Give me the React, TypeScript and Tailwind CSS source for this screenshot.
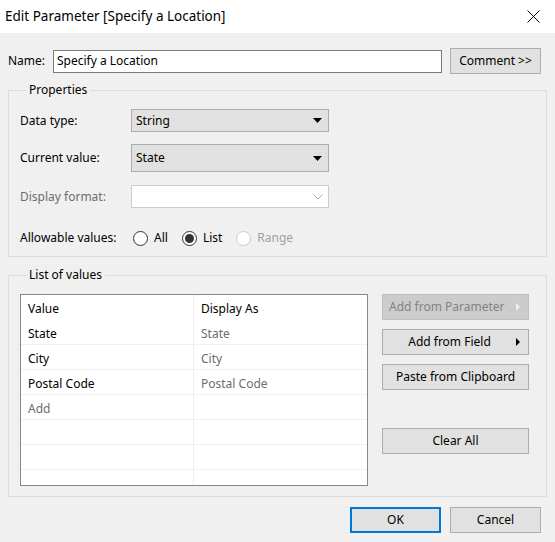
import React from "react";

const font = { fontFamily: '"Noto Sans", "Open Sans", sans-serif' };

function Select({ value, tall }: { value: string; tall?: boolean }) {
  return (
    <div
      className={`flex w-[198px] items-center justify-between border border-[#adadad] bg-[#e1e1e1] pl-[4px] pr-[6px] ${tall ? "h-[28px]" : "h-[23px]"}`}
    >
      <span>{value}</span>
      <svg width="9" height="5" viewBox="0 0 9 5">
        <path d="M0 0h9L4.5 5z" fill="#000" />
      </svg>
    </div>
  );
}

function Radio({ label, checked, disabled }: { label: string; checked?: boolean; disabled?: boolean }) {
  return (
    <div className="flex items-center gap-[6px]">
      <span
        className={`flex h-[15px] w-[15px] items-center justify-center rounded-full border bg-white ${disabled ? "border-[#cccccc]" : "border-[#333333]"}`}
      >
        {checked && <span className="h-[9px] w-[9px] rounded-full bg-[#333333]" />}
      </span>
      <span className={disabled ? "text-[#a0a0a0]" : ""}>{label}</span>
    </div>
  );
}

function Button({ children, className = "" }: { children: React.ReactNode; className?: string }) {
  return (
    <div
      className={`flex h-[26px] items-center justify-center border border-[#adadad] bg-[#e1e1e1] ${className}`}
    >
      {children}
    </div>
  );
}

const rows = [
  { v: "State", d: "State" },
  { v: "City", d: "City" },
  { v: "Postal Code", d: "Postal Code" },
  { v: "Add", d: "", add: true },
  { v: "", d: "" },
  { v: "", d: "" },
];

export default function App() {
  return (
    <div className="h-[542px] w-[555px] overflow-hidden bg-[#f0f0f0] text-[12px] text-black" style={font}>
      {/* title bar */}
      <div className="flex h-[33px] items-center justify-between bg-white pl-[5px] pr-[15px]">
        <span className="text-[13.5px]">Edit Parameter [Specify a Location]</span>
        <svg width="13" height="13" viewBox="0 0 13 13" stroke="#000" strokeWidth="1">
          <path d="M0.5 0.5l12 12M12.5 0.5l-12 12" />
        </svg>
      </div>

      <div className="px-[8px]">
        {/* name row */}
        <div className="mt-[15px] flex h-[26px] items-center">
          <span className="w-[45px]">Name:</span>
          <div className="flex h-[23px] w-[389px] items-center border border-[#7a7a7a] bg-white pl-[3px]">
            Specify a Location
          </div>
          <Button className="ml-[8px] w-[91px]">Comment &gt;&gt;</Button>
        </div>

        {/* properties */}
        <fieldset className="mt-[7px] h-[176px] border border-[#dcdcdc] pl-[11px]">
          <legend className="ml-[6px] px-[3px] leading-[18px]">Properties</legend>
          <div className="mt-[10px] flex h-[23px] items-center">
            <span className="w-[111px]">Data type:</span>
            <Select value="String" />
          </div>
          <div className="mt-[12px] flex h-[28px] items-center">
            <span className="w-[111px]">Current value:</span>
            <Select value="State" tall />
          </div>
          <div className="mt-[13px] flex h-[23px] items-center">
            <span className="w-[111px] text-[#6d6d6d]">Display format:</span>
            <div className="flex h-[23px] w-[198px] items-center justify-end border border-[#cccccc] bg-white pr-[5px]">
              <svg width="10" height="6" viewBox="0 0 10 6" fill="none" stroke="#a8a8a8">
                <path d="M0.5 0.5l4.5 4.5 4.5-4.5" />
              </svg>
            </div>
          </div>
          <div className="mt-[21px] flex h-[18px] items-center">
            <span className="w-[113px]">Allowable values:</span>
            <div className="flex items-center gap-[14px]">
              <Radio label="All" />
              <Radio label="List" checked />
              <Radio label="Range" disabled />
            </div>
          </div>
        </fieldset>

        {/* list of values */}
        <fieldset className="mt-[9px] h-[231px] border border-[#dcdcdc] pl-[11px]">
          <legend className="ml-[6px] px-[3px] leading-[18px]">List of values</legend>
          <div className="mt-[10px] flex">
            <div className="h-[192px] w-[348px] overflow-hidden border border-[#828790] bg-white">
              <div className="flex h-[25px]">
                <span className="w-[173px] border-r border-[#f0f0f0] pl-[7px] leading-[27px]">Value</span>
                <span className="pl-[7px] leading-[27px]">Display As</span>
              </div>
              {rows.map((r, i) => (
                <div key={i} className="flex h-[25px] border-b border-[#f0f0f0]">
                  <span
                    className={`w-[173px] border-r border-[#f0f0f0] pl-[7px] leading-[27px] ${r.add ? "text-[#6d6d6d]" : ""}`}
                  >
                    {r.v}
                  </span>
                  <span className="pl-[7px] leading-[27px] text-[#6d6d6d]">{r.d}</span>
                </div>
              ))}
              <div className="flex h-[25px]">
                <span className="w-[173px] border-r border-[#f0f0f0]" />
              </div>
            </div>

            <div className="ml-[14px] flex w-[147px] flex-col">
              <div className="flex h-[26px] items-center justify-between border border-[#bfbfbf] bg-[#cccccc] pl-[6px] pr-[8px] text-[#838383]">
                <span>Add from Parameter</span>
                <svg width="4" height="8" viewBox="0 0 4 8">
                  <path d="M0 0l4 4-4 4z" fill="#f0f0f0" />
                </svg>
              </div>
              <div className="mt-[9px] flex h-[26px] items-center border border-[#adadad] bg-[#e1e1e1] pr-[8px]">
                <span className="flex-1 text-center">Add from Field</span>
                <svg width="4" height="8" viewBox="0 0 4 8">
                  <path d="M0 0l4 4-4 4z" fill="#000" />
                </svg>
              </div>
              <Button className="mt-[9px]">Paste from Clipboard</Button>
              <Button className="mt-[38px]">Clear All</Button>
            </div>
          </div>
        </fieldset>

        {/* footer */}
        <div className="mt-[10px] flex justify-end gap-[9px] pr-[6px]">
          <div className="flex h-[26px] w-[91px] items-center justify-center border-2 border-[#0078d7] bg-[#e1e1e1]">
            OK
          </div>
          <Button className="w-[91px]">Cancel</Button>
        </div>
      </div>
    </div>
  );
}
